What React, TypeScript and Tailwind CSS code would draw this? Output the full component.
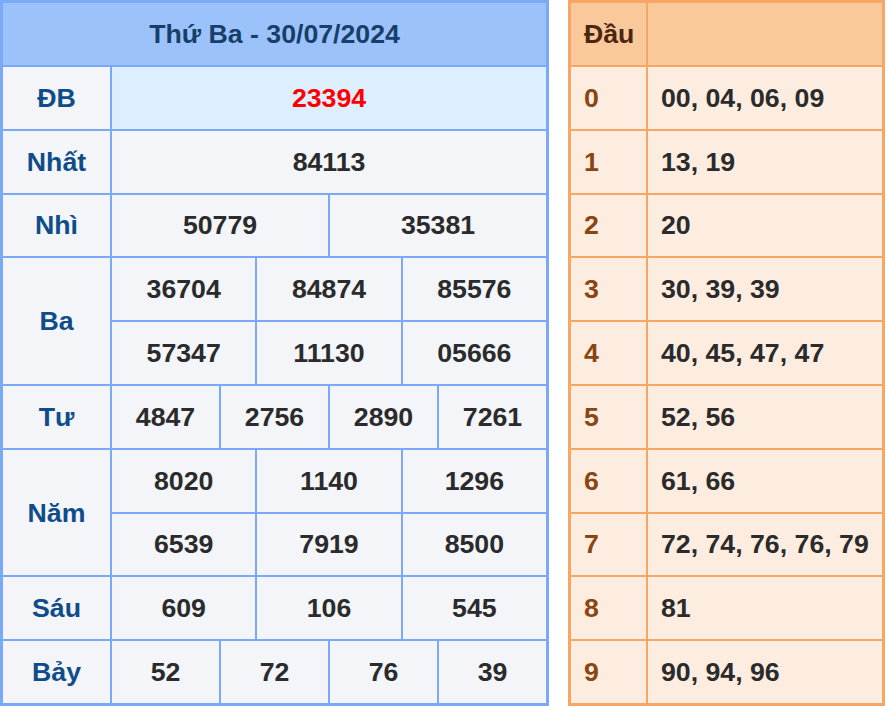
import React from "react";

const font = { fontFamily: '"Liberation Sans", Arial, sans-serif' };

const rows: { label: string; lines: string[][]; rowSpan: number }[] = [
  { label: "Nhất", lines: [["84113"]], rowSpan: 1 },
  { label: "Nhì", lines: [["50779", "35381"]], rowSpan: 1 },
  { label: "Ba", lines: [["36704", "84874", "85576"], ["57347", "11130", "05666"]], rowSpan: 2 },
  { label: "Tư", lines: [["4847", "2756", "2890", "7261"]], rowSpan: 1 },
  { label: "Năm", lines: [["8020", "1140", "1296"], ["6539", "7919", "8500"]], rowSpan: 2 },
  { label: "Sáu", lines: [["609", "106", "545"]], rowSpan: 1 },
  { label: "Bảy", lines: [["52", "72", "76", "39"]], rowSpan: 1 },
];

const spanFor = (n: number) =>
  n === 1 ? "col-span-12" : n === 2 ? "col-span-6" : n === 3 ? "col-span-4" : "col-span-3";

const rowSpanFor = (n: number) => (n === 2 ? "row-span-2" : "row-span-1");

const dau: [string, string][] = [
  ["0", "00, 04, 06, 09"],
  ["1", "13, 19"],
  ["2", "20"],
  ["3", "30, 39, 39"],
  ["4", "40, 45, 47, 47"],
  ["5", "52, 56"],
  ["6", "61, 66"],
  ["7", "72, 74, 76, 76, 79"],
  ["8", "81"],
  ["9", "90, 94, 96"],
];

export default function App() {
  return (
    <div className="flex bg-white w-[888px] h-[706px] gap-[19px]" style={font}>
      <div className="w-[549px] h-[706px] border-[3px] border-[#7aaaf7] bg-[#7aaaf7] grid grid-cols-[107px_repeat(12,1fr)] grid-rows-[62px_repeat(10,1fr)] gap-[2px] font-bold text-[26.7px]">
        <div className="col-span-13 bg-[#9cc2fb] flex items-center justify-center text-[#163f6a]">
          Thứ Ba - 30/07/2024
        </div>
        <div className="bg-[#f3f5f9] flex items-center justify-center text-[#0f4c8a]">ĐB</div>
        <div className="col-span-12 bg-[#ddeeff] flex items-center justify-center text-[#ff0000]">23394</div>
        {rows.map((r) => (
          <React.Fragment key={r.label}>
            <div
              className={`${rowSpanFor(r.rowSpan)} bg-[#f3f5f9] flex items-center justify-center text-[#0f4c8a]`}
            >
              {r.label}
            </div>
            {r.lines.map((line, li) =>
              line.map((t, ti) => (
                <div
                  key={`${li}-${ti}`}
                  className={`${spanFor(line.length)} bg-[#f3f5f9] flex items-center justify-center text-[#2b2b2b]`}
                >
                  {t}
                </div>
              ))
            )}
          </React.Fragment>
        ))}
      </div>
      <div className="w-[317px] h-[706px] border-[3px] border-[#f6a766] bg-[#f6a766] grid grid-cols-[75px_1fr] grid-rows-[62px_repeat(10,1fr)] gap-[2px] font-bold text-[26.7px]">
        <div className="bg-[#f9c89b] flex items-center px-[13px] text-[#4b2710]">Đầu</div>
        <div className="bg-[#f9c89b]"></div>
        {dau.map(([d, v]) => (
          <React.Fragment key={d}>
            <div className="bg-[#fdede0] flex items-center px-[13px] text-[#8a4510]">{d}</div>
            <div className="bg-[#fdede0] flex items-center px-[13px] text-[#2b2b2b] whitespace-nowrap">{v}</div>
          </React.Fragment>
        ))}
      </div>
    </div>
  );
}
